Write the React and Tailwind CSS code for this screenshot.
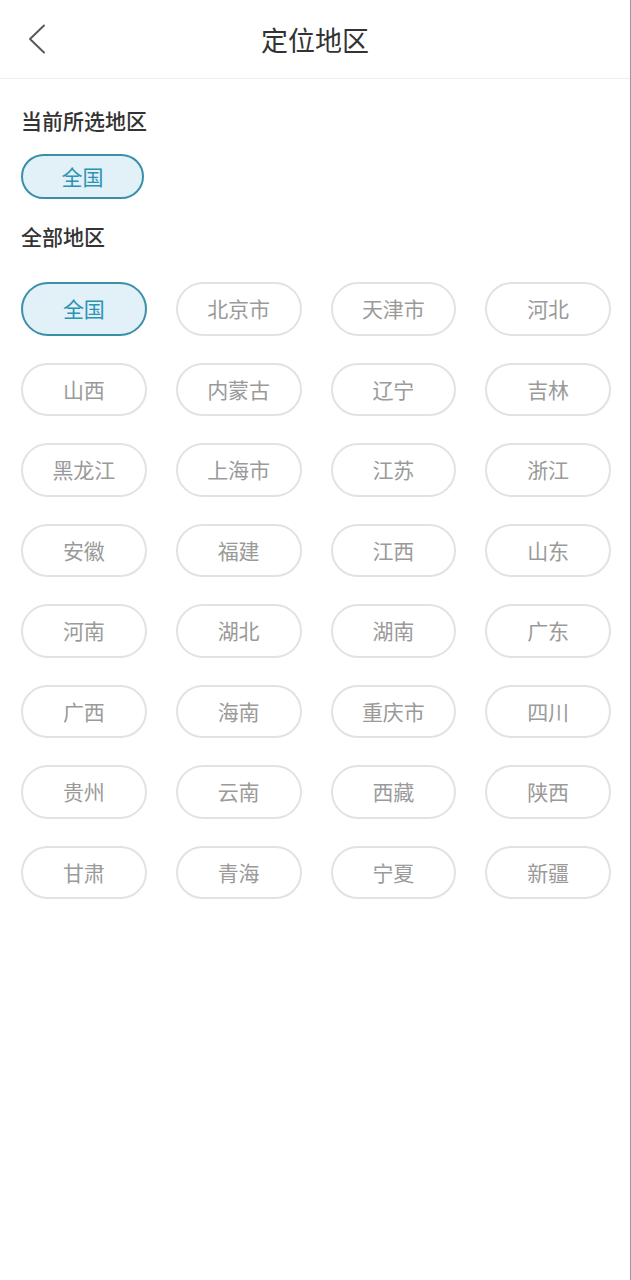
import React, { useState } from "react";

const regions = [
  "全国", "北京市", "天津市", "河北",
  "山西", "内蒙古", "辽宁", "吉林",
  "黑龙江", "上海市", "江苏", "浙江",
  "安徽", "福建", "江西", "山东",
  "河南", "湖北", "湖南", "广东",
  "广西", "海南", "重庆市", "四川",
  "贵州", "云南", "西藏", "陕西",
  "甘肃", "青海", "宁夏", "新疆",
];

function App() {
  const [current, setCurrent] = useState("全国");

  return (
    <div
      className="min-h-[1280px] w-full bg-white border-r border-r-[#9a9a9a]"
      style={{ fontFamily: '"Noto Sans CJK SC", "Noto Sans", sans-serif' }}
    >
      {/* Header */}
      <div className="relative flex h-[79px] items-center justify-center border-b border-[#eeeeee]">
        <button className="absolute left-[26px] top-[24px] p-0" aria-label="返回">
          <svg width="20" height="30" viewBox="0 0 20 30" fill="none">
            <path d="M18 1.5 L4 15 L18 28.5" stroke="#5a5a5a" strokeWidth="2" strokeLinecap="round" strokeLinejoin="round" />
          </svg>
        </button>
        <h1 className="text-[27px] font-normal leading-none text-[#333333]">定位地区</h1>
      </div>

      <div className="pl-[21px] pr-[19px]">
        {/* Current selection */}
        <h2 className="mt-[28px] text-[21px] font-medium leading-[26px] text-[#333333]">当前所选地区</h2>
        <div className="mt-[21px]">
          <span className="flex h-[45px] w-[123px] items-center justify-center rounded-full border-2 border-[#3a8fab] bg-[#e2f0f7] text-[21px] text-[#2c93b2]">
            {current}
          </span>
        </div>

        {/* All regions */}
        <h2 className="mt-[24px] text-[21px] font-medium leading-[26px] text-[#333333]">全部地区</h2>
        <div className="mt-[33px] grid grid-cols-4 gap-x-[29px] gap-y-[27px]">
          {regions.map((name) => {
            const active = name === current;
            return (
              <button
                key={name}
                onClick={() => setCurrent(name)}
                className={
                  active
                    ? "flex h-[53.5px] items-center justify-center rounded-full border-2 border-[#3a8fab] bg-[#e2f0f7] text-[21px] text-[#2c93b2]"
                    : "flex h-[53.5px] items-center justify-center rounded-full border-2 border-[#e2e2e2] bg-white text-[21px] text-[#9a9a9a]"
                }
              >
                {name}
              </button>
            );
          })}
        </div>
      </div>
    </div>
  );
}

export default App;
